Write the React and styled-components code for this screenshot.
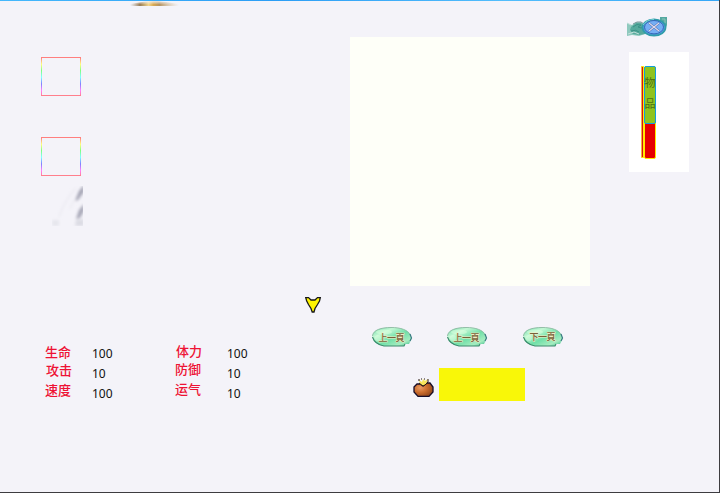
import React from "react";
import styled, { createGlobalStyle } from "styled-components";

const GlobalStyle = createGlobalStyle`
  * { box-sizing: border-box; }
  body { margin: 0; background: #f4f3f9; }
`;

const Window = styled.div`
  width: 720px;
  height: 493px;
  overflow: hidden;
  display: flex;
  flex-direction: column;
  background: #f4f3f9;
  border-right: 1px solid #3d3c40;
  border-bottom: 1px solid #3d3c40;
  font-family: "Noto Sans", "Noto Sans CJK SC", sans-serif;
`;

const TopEdge = styled.header`
  flex: none;
  height: 7px;
  display: flex;
  flex-direction: column;
  &::before {
    content: "";
    height: 1px;
    margin-right: -1px;
    background: linear-gradient(90deg, #45b8fc, #2b9df5 38%, #52bdfc 70%, #35a6f7);
  }
`;

const Ornament = styled.svg`
  display: block;
  width: 50px;
  height: 6px;
  margin-left: 130px;
`;

const Columns = styled.main`
  flex: 1;
  display: flex;
  align-items: flex-start;
`;

const Character = styled.section`
  width: 350px;
  flex: none;
  padding: 50px 0 0 41px;
  display: flex;
  flex-direction: column;
`;

const Slot = styled.div`
  width: 40px;
  height: 39px;
  margin-bottom: ${(p) => p.$gap}px;
  padding: 0 1px;
  border-top: 1px solid #ff7f7f;
  border-bottom: 1px solid #ff7f8c;
  background:
    linear-gradient(#f4f3f9, #f4f3f9) content-box,
    linear-gradient(#ff7f7f, #ffff7f 17%, #7fff7f 34%, #7fffff 52%, #7f7fff 70%, #ff7fff 87%, #ff7f9f);
`;

const Feather = styled.svg`
  display: block;
  width: 31px;
  height: 40px;
  margin-left: 11px;
`;

const Arrow = styled.svg`
  display: block;
  width: 17px;
  height: 17px;
  margin: 70px 0 0 264px;
`;

const Stats = styled.div`
  display: flex;
  margin-top: 30px;
`;

const StatGroup = styled.dl`
  width: ${(p) => p.$width}px;
  margin: 0;
  display: grid;
  grid-template-columns: ${(p) => p.$label}px 1fr;
  grid-auto-rows: 20px;
`;

const StatLabel = styled.dt`
  padding-left: ${(p) => p.$indent}px;
  margin-top: ${(p) => p.$rise}px;
  color: #ee1234;
  font: 500 13px/18px "Noto Sans CJK SC", sans-serif;
`;

const StatValue = styled.dd`
  margin: 0;
  color: #111;
  font: 12px/22px "Noto Sans", sans-serif;
`;

const Inventory = styled.section`
  width: 240px;
  flex: none;
  padding-top: 30px;
`;

const ItemPanel = styled.div`
  height: 249px;
  background: #fefff8;
`;

const Pager = styled.nav`
  display: flex;
  margin: 40px 0 0 21px;
`;

const PageButton = styled.button`
  flex: none;
  width: 42px;
  height: 22px;
  padding: 0;
  margin-right: ${(p) => p.$gap}px;
  border: 0;
  background: none;
  svg { display: block; }
`;

const Purse = styled.div`
  display: flex;
  align-items: flex-start;
  margin: 20px 0 0 63px;
  svg { margin-top: 10px; }
`;

const Money = styled.div`
  width: 86px;
  height: 33px;
  margin-left: 5px;
  background: #f9f708;
`;

const Side = styled.aside`
  margin-left: 37px;
  padding-top: 10px;
`;

const CloseButton = styled.button`
  display: block;
  width: 41px;
  height: 20px;
  padding: 0;
  border: 0;
  background: none;
  svg { display: block; }
`;

const TabPanel = styled.div`
  display: flex;
  width: 60px;
  height: 120px;
  margin: 15px 0 0 2px;
  padding: 14px 0 0 12px;
  background: #fff;
`;

const Spine = styled.div`
  width: 3px;
  height: 92px;
  border: solid #ffec00;
  border-width: 1px 1px 1px 0;
  border-left: 1px solid #f5b23a;
  border-radius: 1px;
  background: #d51018;
`;

const TabStack = styled.div`
  width: 12px;
  height: 93px;
  border: 1px solid #ffec00;
  border-radius: 2px;
  background: #e60000;
`;

const ItemTab = styled.div`
  width: 12px;
  height: 58px;
  margin: -1px;
  padding-top: 5px;
  border: 1px solid #109ede;
  border-radius: 2px;
  display: flex;
  flex-direction: column;
  align-items: center;
  background: #8fc31f;
  color: #4c7012;
  font: 11px/21px "Noto Sans CJK SC", sans-serif;
`;

const TabGlyph = styled.span`
  height: 21px;
`;

function StatRows({ rows }) {
  return rows.map(([label, value, indent, rise]) => (
    <React.Fragment key={label}>
      <StatLabel $indent={indent} $rise={rise}>{label}</StatLabel>
      <StatValue>{value}</StatValue>
    </React.Fragment>
  ));
}

function PageBadge({ id, label, lift = 0 }) {
  return (
    <svg width="42" height="22" viewBox="0 0 42 22">
      <defs>
        <linearGradient id={id} x1="0" y1="0" x2="1" y2="1">
          <stop offset="0" stopColor="#65d8a4" />
          <stop offset=".28" stopColor="#c5f8d5" />
          <stop offset=".55" stopColor="#70dfa8" />
          <stop offset=".8" stopColor="#a5edc0" />
          <stop offset="1" stopColor="#35b587" />
        </linearGradient>
      </defs>
      <path d="M1.5 10C1.5 4 10 1.5 20 1.5S38 4 39.5 9L40.5 13L38 18H34L33 20H13C6 18.5 1.5 16 1.5 10Z" fill={`url(#${id})`} />
      <path d="M1.5 10C2 4 10 1.5 20 1.5S37 4 39 9" fill="none" stroke="#8bb8a0" strokeWidth=".9" />
      <path d="M1.5 11C3 16 8 19 13 20H33L34 18" fill="none" stroke="#3a8a6c" strokeWidth="1.1" />
      <path d="M39 8L40.5 12L39 15" fill="none" stroke="#397b83" strokeWidth="1.2" />
      <ellipse cx="13" cy="6" rx="8" ry="2.5" fill="#ddffdf" opacity=".5" />
      <ellipse cx="7" cy="12" rx="3" ry="3" fill="#ddffdf" opacity=".45" />
      <text x="20.5" y={15 - lift} textAnchor="middle" fontFamily="Noto Sans CJK TC, sans-serif" fontSize="9" fontWeight="500" fill="#76623a" stroke="#f0edc5" strokeWidth="1" paintOrder="stroke" textLength="26">{label}</text>
    </svg>
  );
}

export default function App() {
  return (
    <>
      <GlobalStyle />
      <Window>
        <TopEdge>
          <Ornament viewBox="0 0 50 6">
            <defs>
              <linearGradient id="gold">
                <stop offset="0" stopColor="#a99b88" stopOpacity="0" />
                <stop offset=".2" stopColor="#9a7d55" />
                <stop offset=".38" stopColor="#f2d58e" />
                <stop offset=".48" stopColor="#d9a953" />
                <stop offset=".6" stopColor="#b69462" />
                <stop offset="1" stopColor="#d8c199" stopOpacity="0" />
              </linearGradient>
              <linearGradient id="fade" x2="0" y2="1">
                <stop offset="0" stopColor="#f4f3f9" stopOpacity=".85" />
                <stop offset=".7" stopColor="#f4f3f9" stopOpacity="0" />
              </linearGradient>
            </defs>
            <path d="M0 3L12 1L19 0H28L36 1L49 3V5H0Z" fill="url(#gold)" />
            <path d="M0 0H50V5H0Z" fill="url(#fade)" />
          </Ornament>
        </TopEdge>
        <Columns>
          <Character>
            <Slot $gap={41} />
            <Slot $gap={10} />
            <Feather viewBox="0 0 31 40">
              <defs>
                <filter id="soft"><feGaussianBlur stdDeviation="1.5" /></filter>
              </defs>
              <g filter="url(#soft)">
                <path d="M32 -1L27 5L23 15L26 14L32 6Z" fill="#a3a3b3" />
                <path d="M32 18L27 24L24 33L28 32L32 25Z" fill="#a6a6b6" />
                <path d="M24 34L23 40H32V33Z" fill="#dcdce4" />
                <path d="M24 2Q12 15 7 31M22 14L18 23" stroke="#ebeaf1" strokeWidth="1.6" fill="none" />
                <path d="M0 34H7V40H0Z" fill="#e6e6ed" />
              </g>
            </Feather>
            <Arrow viewBox="0 0 17 17">
              <path d="M.7 1.6H3.5L6 4H10L12.5 1.6H15.3L14.5 5L12.5 8.5L10 12.5L9 16H7.2L6 12.5L3.5 8.5L1.7 5Z" fill="#fff500" stroke="#171719" strokeWidth="1.3" />
            </Arrow>
            <Stats>
              <StatGroup $width={133} $label={51}>
                <StatRows rows={[["生命", "100", 4, 0], ["攻击", "10", 5, -2], ["速度", "100", 4, -2]]} />
              </StatGroup>
              <StatGroup $width={110} $label={53}>
                <StatRows rows={[["体力", "100", 2, -1], ["防御", "10", 1, -3], ["运气", "10", 1, -3]]} />
              </StatGroup>
            </Stats>
          </Character>
          <Inventory>
            <ItemPanel />
            <Pager>
              <PageButton $gap={33}><PageBadge id="first" label="上一頁" /></PageButton>
              <PageButton $gap={34}><PageBadge id="previous" label="上一頁" /></PageButton>
              <PageButton $gap={0}><PageBadge id="next" label="下一頁" lift={1} /></PageButton>
            </Pager>
            <Purse>
              <svg width="21" height="20" viewBox="0 0 21 20">
                <defs>
                  <radialGradient id="leather" cx=".33" cy=".35" r=".7">
                    <stop offset="0" stopColor="#e99c66" />
                    <stop offset=".5" stopColor="#cd6e2e" />
                    <stop offset="1" stopColor="#96481a" />
                  </radialGradient>
                </defs>
                <path d="M1 9L4 6H7L10 8L14 5H17L20 9V14L16 18.4H5L1 14Z" fill="url(#leather)" stroke="#160c28" strokeWidth="1.3" />
                <path d="M6 2L9 4L10 1L12 3L15 1L13 6L10 8L7 6Z" fill="#f8e65c" />
                <path d="M6 1V3M15 1V4L12 7L10 8L6 5M8 1H9M11 1H12" fill="none" stroke="#28170e" />
              </svg>
              <Money />
            </Purse>
          </Inventory>
          <Side>
            <CloseButton>
              <svg width="41" height="20" viewBox="0 0 41 20">
                <path d="M0 6L5 8L9 5H14L18 8V17L12 19L5 18L0 19Z" fill="#8fc9be" />
                <path d="M4 10L9 6H14L18 9V17L12 18L6 17L3 13Z" fill="#56a99c" />
                <path d="M6 10Q10 6 14 8L11 10Q14 12 17 10M4 14Q9 12 12 15" stroke="#3b9187" fill="none" />
                <path d="M0 6L4 8M1 17L7 15L12 17" stroke="#c2dfda" fill="none" />
                <path d="M6 7L10 5H14L17 7" stroke="#7d969b" fill="none" />
                <path d="M33 0H40V8L38 13L33 14Z" fill="#54a8a1" />
                <path d="M35 2H38V6" fill="none" stroke="#8bc6b8" />
                <ellipse cx="27" cy="10.5" rx="11.5" ry="8" fill="#5fa0e9" stroke="#2f9cab" strokeWidth="1.8" />
                <path d="M16 8Q19 3 27 2.5" fill="none" stroke="#7cd3d6" />
                <ellipse cx="27" cy="10.2" rx="9.5" ry="6.7" fill="#75aef4" stroke="#2e5eb0" strokeWidth=".9" />
                <path d="M22 6L32 14M32 6L22 14" stroke="#4c65a5" strokeWidth="2.2" />
                <path d="M22 6L32 14M32 6L22 14" stroke="#e2dcec" strokeWidth="1.2" />
              </svg>
            </CloseButton>
            <TabPanel>
              <Spine />
              <TabStack>
                <ItemTab>
                  <TabGlyph>物</TabGlyph>
                  <TabGlyph>品</TabGlyph>
                </ItemTab>
              </TabStack>
            </TabPanel>
          </Side>
        </Columns>
      </Window>
    </>
  );
}
